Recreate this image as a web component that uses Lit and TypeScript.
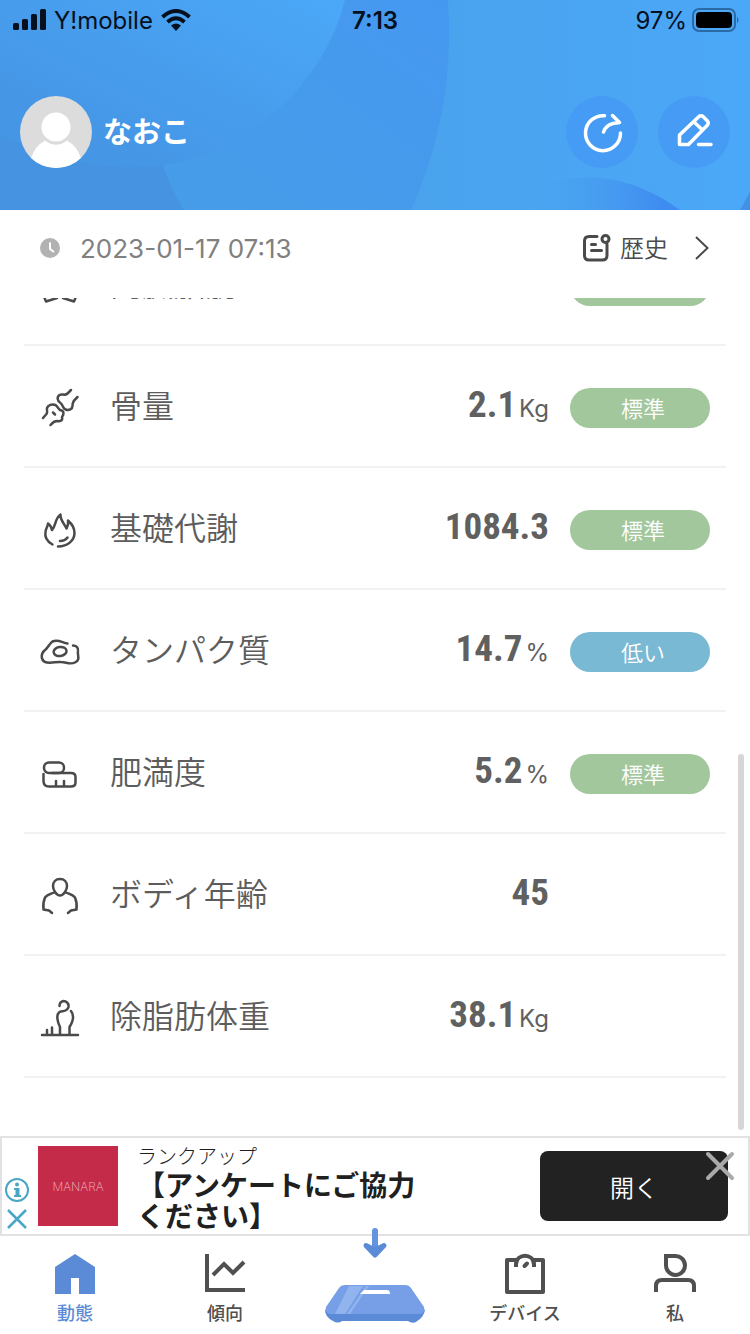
import { LitElement, html, css, svg } from 'lit';
import { customElement } from 'lit/decorators.js';

type Metric = { icon: unknown; label: string; value: string; unit?: string; level?: string; tone?: string };

const metrics: Metric[] = [
  { icon: svg`<path d="M3 28 L6 35.500 L17 32 M23 32 L34 35.500 L37 28 V10 L20 5 L3 10 V28"/>`, label: '内臓脂肪', value: '6.0', level: '標準', tone: 'ok' },
  { icon: svg`<path d="M3 30 L6.500 26 C8 24 6.500 22 7 20 C8 17 12 15.500 15.500 17 C17 18 18 20 20 22 C24 22.500 24.500 26 22 29 C23 33 20 33.500 17 33 C14 33 13 34 10.500 37 M13 24.500 L15 26.500"/><path d="M31 2 L27.500 5.500 C25 8 22 5.500 19.500 7 C16.500 9 17.500 13 20 14.500 C23 16 22 20 25.500 21.500 C29 23 32.500 21 32.500 18 C32.500 14 33.500 13 37.500 9"/>`, label: '骨量', value: '2.1', unit: 'Kg', level: '標準', tone: 'ok' },
  { icon: svg`<path d="M12.500 34.500 C7 31.500 4.500 27 5.500 21.500 C6 18 8 16 8 13.500 C10 15 11.500 17 12 20 C16 16 15 8 20.500 4.500 C20 10 24 13 26.500 18.500 C28 16 28.500 13.500 28 10.500 C32 14 34.500 18 34.500 23 C34.500 30 28 36.500 18 36.500 M20 31 Q25 31 27.500 27.500"/>`, label: '基礎代謝', value: '1084.3', level: '標準', tone: 'ok' },
  { icon: svg`<path d="M27.500 11.500 C22 10.500 18 7 12.500 9.500 C9 12 8 16 4.500 18.500 C0.500 22 1 28 5 30 C10 32 16 29.500 21 30 C26 30 30 33 35 30.500 C41 27.500 37 23 38 19 C38.500 15.500 36 13.500 33 13.500"/><ellipse cx="20" cy="19.500" rx="6.500" ry="4.500" transform="rotate(-8 20 19)"/>`, label: 'タンパク質', value: '14.7', unit: '%', level: '低い', tone: 'low' },
  { icon: svg`<rect x="4" y="8.500" width="20" height="10.500" rx="5"/><path d="M3.500 20 V27 Q3.500 32.500 9 32.500 H31 Q35.500 32.500 35.500 28.500 V23 Q35.500 19 31 19 H12 M16 27 V32 M24 27 V32"/>`, label: '肥満度', value: '5.2', unit: '%', level: '標準', tone: 'ok' },
  { icon: svg`<path d="M20 3 C15.500 3 13 6 13 10 C13 14 16.500 19.500 20 19.500 C23.500 19.500 27 14 27 10 C27 6 24.500 3 20 3 Z M14 16.500 C11 18 7 18.500 5 21.500 C3.500 25 3 30 3.500 33.500 L9 34.500 L12 37 M26 16.500 C29 18 33 18.500 35 21.500 C36.500 25 37 30 36.500 33.500 L31 34.500 L28 37"/>`, label: 'ボディ年齢', value: '45' },
  { icon: svg`<path d="M2 37 H38 M7 37 V32 M12 37 V29.500 M20 37 V29 C17.500 24 16 17 19 14.500 C21 12 27 15 28.500 9 C29 5 26 3 23.500 3 C21 3.500 19.500 5 19.500 8 M31 13 C35 18 32 25 29.500 29 V37"/>`, label: '除脂肪体重', value: '38.1', unit: 'Kg' },
];

@customElement('app-root')
export class AppRoot extends LitElement {
  static styles = css`
    :host { display: flex; flex-direction: column; height: 100vh; background: #fff; color: #5c5c5c;
      font-family: Inter, "Noto Sans CJK JP", sans-serif; overflow: hidden; }
    * { box-sizing: border-box; }
    svg { display: block; fill: none; flex: none; }
    button { border: 0; padding: 0; background: none; font: inherit; color: inherit; }
    a { color: inherit; text-decoration: none; }
    .hero { position: relative; height: 210px; flex: none; display: flex; flex-direction: column; background: #4799ea; }
    .backdrop { position: absolute; inset: 0; width: 100%; height: 100%; }
    .status { position: relative; display: grid; grid-template-columns: 1fr auto 1fr; align-items: center; height: 40px; padding: 0 12px; color: #06101e; font-size: 24px; }
    .carrier, .power { display: flex; align-items: center; gap: 8px; }
    .power { justify-content: flex-end; gap: 5px; margin-right: -2px; }
    .time { font-weight: 600; }
    .profile { position: relative; display: flex; align-items: center; height: 72px; margin-top: 56px; padding: 0 20px; }
    .name { flex: 1; margin: 0 0 0 11px; padding-top: 2px; font-size: 29px; line-height: 40px; font-weight: 700; color: #fff; }
    .round { width: 72px; height: 72px; margin-left: 20px; border-radius: 50%; background: #469cf5; }
    .bar { display: flex; align-items: center; flex: none; height: 88px; padding: 0 40px 12px; }
    .date { flex: 1; margin-left: 20px; font-size: 26px; color: #808080; }
    .history { display: flex; align-items: center; font-size: 24px; line-height: 36px; color: #4a4a4a; }
    .history span { margin: 2px 26px 0 9px; font-weight: 350; }
    .scroller { position: relative; flex: 1; min-height: 0; overflow: hidden; display: flex; flex-direction: column; justify-content: flex-end; padding: 0 24px 58px; }
    .thumb { position: absolute; right: 6px; bottom: 6px; width: 6px; height: 376px; border-radius: 3px; background: #d6d6d6; }
    .list { margin: 0; padding: 0; list-style: none; flex: none; }
    .row { display: flex; align-items: center; height: 122px; padding: 4px 16px 0; border-bottom: 2px solid #f1f1f1; }
    .row svg { stroke: #4a4a4a; stroke-width: 2.500; stroke-linecap: round; stroke-linejoin: round; }
    .label { flex: 1; margin-left: 30px; padding-bottom: 2px; font-size: 32px; line-height: 48px; font-weight: 350; }
    .value { display: flex; align-items: baseline; padding-bottom: 6px; font-family: "Roboto Condensed", "Liberation Sans Narrow", sans-serif; font-size: 37px; line-height: 48px; font-weight: 700; color: #606060; }
    .unit { margin-left: 3px; font: 400 24px/24px Inter, sans-serif; }
    .pill { width: 140px; height: 40px; margin-left: 21px; padding-left: 6px; border-radius: 20px; font-size: 22px; line-height: 42px; text-align: center; color: #fff; font-weight: 350; }
    .ok { background: #a2c79c; }
    .low { background: #7ab9d4; }
    .ad { position: relative; display: flex; align-items: center; flex: none; height: 100px; padding: 0 20px 0 2px; border: 2px solid #e2e2e2; }
    .adinfo { display: flex; flex-direction: column; gap: 6px; margin-top: 34px; }
    .brand { display: grid; place-items: center; width: 80px; height: 80px; margin-left: 8px; background: #c42b49; color: #efb6c0; font-size: 12px; font-weight: 200; }
    .adtext { flex: 1; margin-left: 19px; padding-top: 4px; color: #202020; }
    .advertiser { margin: 0; font-size: 20px; line-height: 28px; font-weight: 300; }
    .headline { margin: 0; font-size: 28px; line-height: 31px; font-weight: 700; }
    .open { width: 188px; height: 70px; border-radius: 8px; background: #222; color: #fff; font-size: 24px; font-weight: 350; }
    .dismiss { position: absolute; right: 13px; top: 13px; }
    .tabs { display: grid; grid-template-columns: repeat(5, 1fr); flex: none; height: 98px; }
    .tab { display: flex; flex-direction: column; align-items: center; padding-top: 16px; font-size: 18px; line-height: 28px; font-weight: 500; color: #505050; }
    .tab svg { margin-bottom: 6px; overflow: visible; }
    .active { color: #5b8bd6; }
    .scale { position: relative; padding-top: 0; }
    .scale svg { margin-top: -8px; }
  `;

  render() {
    return html`
      <header class="hero">
        <svg class="backdrop" viewBox="0 0 750 210" preserveAspectRatio="none" aria-hidden="true">
          <defs>
            <linearGradient id="a" x1="0" y1="1" x2="1" y2="0"><stop offset=".2" stop-color="#4596e5"/><stop offset="1" stop-color="#4ba8f8"/></linearGradient>
            <linearGradient id="b" x1="0" y1="1" x2="1" y2="0"><stop offset="0" stop-color="#479de8"/><stop offset="1" stop-color="#4598f0"/></linearGradient>
            <linearGradient id="c"><stop offset="0" stop-color="#4aa2ec"/><stop offset="1" stop-color="#4ba8f8"/></linearGradient>
            <linearGradient id="d"><stop offset=".2" stop-color="#48a0ec" stop-opacity="0"/><stop offset=".9" stop-color="#3f8cf0"/></linearGradient>
          </defs>
          <path fill="#4593e1" d="M0 0H750V210H0Z"/>
          <path fill="url(#c)" d="M400 0H750V210H400Z"/>
          <path fill="url(#b)" d="M160 0H448Q456 110 411 210H184Q172 190 163 166Z"/>
          <path fill="url(#a)" d="M0 0H345C322 92 232 167 136 167C86 167 40 155 0 134Z"/>
          <path fill="url(#d)" d="M495 210Q590 145 680 210Z"/>
          <path fill="#4291e6" d="M740 210L750 192V210Z"/>
        </svg>
        <div class="status">
          <div class="carrier">
            <svg width="34" height="22" viewBox="0 0 34 22"><g fill="#06101e"><rect x="1" y="14" width="6" height="7" rx="1.500"/><rect x="10" y="10" width="6" height="11" rx="1.500"/><rect x="19" y="5" width="6" height="16" rx="1.500"/><rect x="28" y="0" width="6" height="21" rx="1.500"/></g></svg>
            <span>Y!mobile</span>
            <svg width="30" height="22" viewBox="0 0 30 22"><path d="M1.500 8Q15-4 28.500 8M6.500 13Q15 5.500 23.500 13" stroke="#06101e" stroke-width="4"/><path fill="#06101e" d="M10 16.500Q15 12.500 20 16.500L15 22Z"/></svg>
          </div>
          <span class="time">7:13</span>
          <div class="power"><span>97%</span>
            <svg width="48" height="24" viewBox="0 0 48 24"><rect x="1" y="1" width="42" height="22" rx="6" stroke="#2b6ba5" stroke-width="2"/><rect x="4" y="4" width="36" height="16" rx="4" fill="#000"/><path d="M45 8.500Q48 12 45 15.500Z" fill="#2b6ba5"/></svg>
          </div>
        </div>
        <div class="profile">
          <svg width="72" height="72" viewBox="0 0 72 72"><defs><clipPath id="av"><circle cx="36" cy="36" r="36"/></clipPath></defs><g clip-path="url(#av)"><path fill="#dcdcdc" d="M0 0H72V72H0Z"/><circle cx="36" cy="31" r="14.500" fill="#fff"/><path fill="#fff" d="M11 62Q15 50 25 44.500Q36 53 47 44.500Q57 50 61 62V72H11Z"/></g></svg>
          <h1 class="name">なおこ</h1>
          <button class="round" aria-label="共有"><svg width="72" height="72" viewBox="0 0 72 72" stroke="#fff" stroke-width="3.500" stroke-linecap="round" stroke-linejoin="round"><path d="M38.500 19.700A17.500 17.500 0 1 0 54.500 37M46.500 19.500L53.500 26.500L47 27.500Q39.500 29.500 37.500 36"/></svg></button>
          <button class="round" aria-label="編集"><svg width="72" height="72" viewBox="0 0 72 72" stroke="#fff" stroke-width="3.500" stroke-linecap="round" stroke-linejoin="round"><path d="M21.500 48.500V39L41 20.500Q43 19 45 20.500L49.500 25Q51 27 49.500 29L30.500 48.500ZM36 26L44 33.500M40.500 48.500H53"/></svg></button>
        </div>
      </header>
      <div class="bar">
        <svg width="20" height="20" viewBox="0 0 20 20"><circle cx="10" cy="10" r="10" fill="#b2b2b2"/><path d="M10 4.500V11L14 14" stroke="#fff" stroke-width="2"/></svg>
        <time class="date" datetime="2023-01-17T07:13">2023-01-17 07:13</time>
        <a class="history" href="#history">
          <svg width="28" height="28" viewBox="0 0 28 28" stroke="#4a4a4a" stroke-width="3" stroke-linecap="round"><path d="M14 2.500H6Q1.500 2.500 1.500 7V21.500Q1.500 26 6 26H19.500Q24 26 24 21.500V10M8.500 10.500H12.500M8.500 16.500H18.500"/><circle cx="22.500" cy="5" r="3.500"/></svg>
          <span>歴史</span>
          <svg width="16" height="24" viewBox="0 0 16 24" stroke="#4a4a4a" stroke-width="2"><path d="M2 1L13.500 12L2 23"/></svg>
        </a>
      </div>
      <main class="scroller">
        <ul class="list">
          ${metrics.map((m) => html`<li class="row">
            <svg width="40" height="40" viewBox="0 0 40 40">${m.icon}</svg>
            <span class="label">${m.label}</span>
            <span class="value">${m.value}${m.unit ? html`<span class="unit">${m.unit}</span>` : ''}</span>
            <span class="pill ${m.tone ?? ''}">${m.level ?? ''}</span>
          </li>`)}
        </ul>
        <div class="thumb"></div>
      </main>
      <aside class="ad">
        <div class="adinfo">
          <svg width="26" height="26" viewBox="0 0 26 26" stroke="#4aa6c6" stroke-width="2"><circle cx="13" cy="13" r="11"/><circle cx="13" cy="7.500" r="2" fill="#4aa6c6" stroke="none"/><path d="M10 12H13M10 19H17"/><path d="M13.500 11V20" stroke-width="4"/></svg>
          <svg width="26" height="20" viewBox="0 0 26 20" stroke="#4aa6c6" stroke-width="2.500"><path d="M4 1L22 19M22 1L4 19"/></svg>
        </div>
        <div class="brand">MANARA</div>
        <div class="adtext">
          <p class="advertiser">ランクアップ</p>
          <p class="headline">【アンケートにご協力<br>ください】</p>
        </div>
        <button class="open">開く</button>
        <button class="dismiss" aria-label="閉じる"><svg width="30" height="30" viewBox="0 0 30 30" stroke="#aaa" stroke-width="4" stroke-linecap="round"><path d="M3 3L27 27M27 3L3 27"/></svg></button>
      </aside>
      <nav class="tabs">
        <a class="tab active" href="#home"><svg width="42" height="42" viewBox="0 0 42 42"><path fill="#5b8bd6" d="M1 15L21 2L41 15V42H25V26H17V42H1Z"/></svg>動態</a>
        <a class="tab" href="#trend"><svg width="42" height="42" viewBox="0 0 42 42" stroke="#505050" stroke-width="4"><path d="M3 2V38H41M9 23L20 12L29 21L40 10"/></svg>傾向</a>
        <a class="tab scale" href="#measure" aria-label="測定"><svg width="104" height="98" viewBox="0 0 104 98">
          <path d="M52 3V24" stroke="#6494de" stroke-width="6" stroke-linecap="round"/>
          <path fill="#5b8bd6" stroke="#5b8bd6" stroke-width="5" stroke-linecap="round" stroke-linejoin="round" d="M43 17.500L52 27L61 17.500L52 22Z"/>
          <path fill="#5b8bd6" d="M2 82L18 76H86L102 82Q101 89 93 94Q89 96 85 93H19Q15 96 10 93Q2 89 2 82Z"/>
          <path fill="#769fe8" d="M16 60Q18 57 22 57H82Q86 57 88 60L101 79Q103 86 96 86H8Q1 86 3 79Z"/>
          <path fill="#91b3ee" d="M26 58H40L22 86H12ZM43 58H46L27 86H24Z"/>
          <path fill="#fff" d="M41 62H64Q67 62 67 66H37Z"/>
        </svg></a>
        <a class="tab" href="#device"><svg width="42" height="42" viewBox="0 0 42 42" stroke="#505050" stroke-width="4"><path stroke-linejoin="round" d="M12 8H3V40H39V8H30"/><path d="M12 15V12C13 1 29 1 30 12V15"/><path stroke-linecap="round" d="M20.500 14L23 11.500"/></svg>デバイス</a>
        <a class="tab" href="#me"><svg width="42" height="42" viewBox="0 0 42 42" stroke="#505050" stroke-width="4"><path d="M12 4H21A9.500 9.500 0 1 1 12 13ZM2 40V34Q2 28 8 28H34Q40 28 40 34V40"/></svg>私</a>
      </nav>
    `;
  }
}
